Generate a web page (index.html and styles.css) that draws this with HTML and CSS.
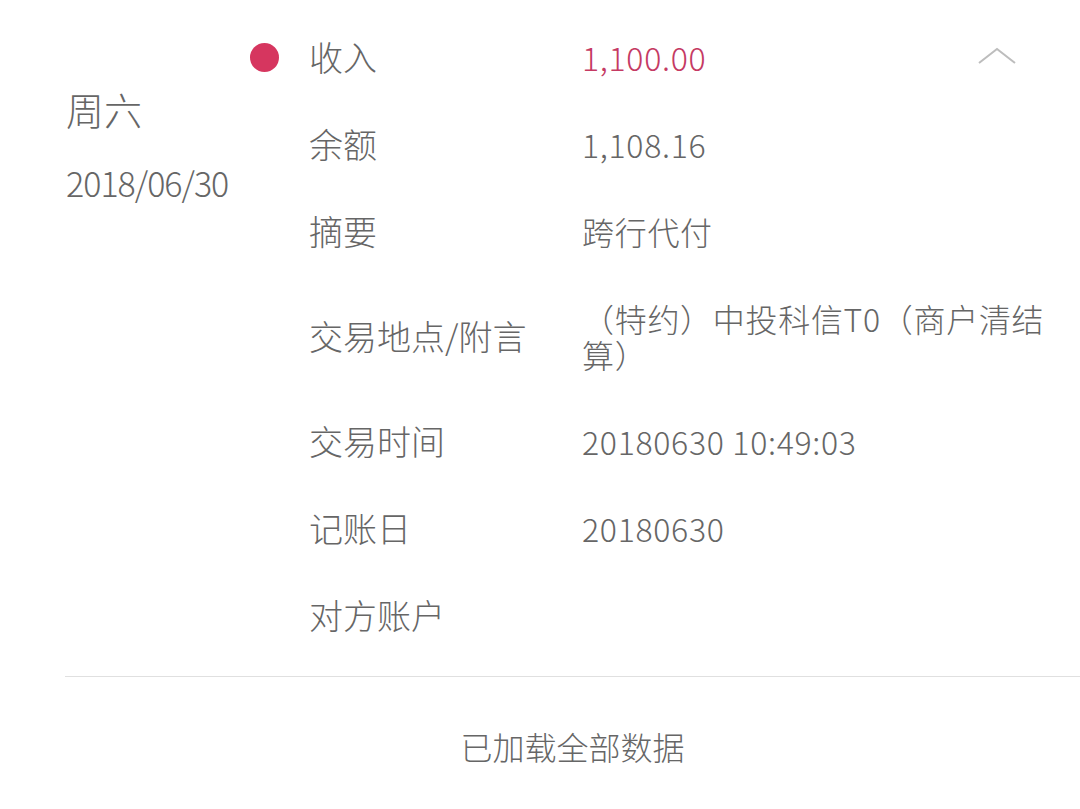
FILE: index.html
```html
<!DOCTYPE html>
<html lang="zh-CN">
<head>
    <meta charset="UTF-8">
    <meta name="viewport" content="width=device-width, initial-scale=1.0">
    <title>交易明细</title>
    <link rel="stylesheet" href="styles.css">
</head>
<body>
    <div class="day">
        <div class="day-side">
            <div class="weekday">周六</div>
            <div class="date">2018/06/30</div>
        </div>

        <div class="detail">
            <!-- 收入 -->
            <div class="row">
                <div class="mark"><span class="dot"></span></div>
                <div class="label">收入</div>
                <div class="value amount">
                    <span>1,100.00</span>
                    <svg class="chevron" width="38" height="18" viewBox="0 0 38 18">
                        <polyline points="1,16 19,2 37,16" fill="none" stroke="#bdbdbd" stroke-width="2"/>
                    </svg>
                </div>
            </div>
            <div class="row">
                <div class="mark"></div>
                <div class="label">余额</div>
                <div class="value">1,108.16</div>
            </div>
            <div class="row">
                <div class="mark"></div>
                <div class="label">摘要</div>
                <div class="value">跨行代付</div>
            </div>
            <div class="row">
                <div class="mark"></div>
                <div class="label">交易地点/附言</div>
                <div class="value">（特约）中投科信T0（商户清结算）</div>
            </div>
            <div class="row">
                <div class="mark"></div>
                <div class="label">交易时间</div>
                <div class="value">20180630 10:49:03</div>
            </div>
            <div class="row">
                <div class="mark"></div>
                <div class="label">记账日</div>
                <div class="value">20180630</div>
            </div>
            <div class="row">
                <div class="mark"></div>
                <div class="label">对方账户</div>
                <div class="value"></div>
            </div>
        </div>
    </div>

    <div class="footer">已加载全部数据</div>
</body>
</html>
```

FILE: styles.css
```css
* {
    margin: 0;
    padding: 0;
    box-sizing: border-box;
}

body {
    font-family: "Noto Sans CJK SC", "Noto Sans", sans-serif;
    font-weight: 300;
    background: #fff;
    color: #666;
}

.day {
    display: flex;
    margin-left: 65px;
    padding: 14px 0 17px 1px;
    border-bottom: 1px solid #e0e0e0;
}

.day-side {
    width: 184px;
    padding-top: 71px;
}

.weekday {
    font-size: 38px;
    line-height: 48px;
}

.date {
    margin-top: 28px;
    font-size: 34px;
    line-height: 44px;
    letter-spacing: -1px;
}

.detail {
    flex: 1;
}

.row {
    display: flex;
    align-items: center;
    padding: 25px 30px 26px 0;
    line-height: 36px;
}

.mark {
    width: 59px;
    height: 36px;
    display: flex;
    align-items: center;
}

.dot {
    width: 29px;
    height: 29px;
    border-radius: 50%;
    background: #d6365f;
}

.label {
    width: 273px;
    font-size: 34px;
}

.value {
    flex: 1;
    font-size: 32px;
    letter-spacing: 0.7px;
}

.amount {
    display: flex;
    align-items: center;
    color: #c53a63;
}

.chevron {
    margin-left: auto;
    margin-right: 34px;
    margin-top: -2px;
}

.footer {
    margin-left: 65px;
    height: 138px;
    display: flex;
    align-items: center;
    justify-content: center;
    font-size: 32px;
}
```
